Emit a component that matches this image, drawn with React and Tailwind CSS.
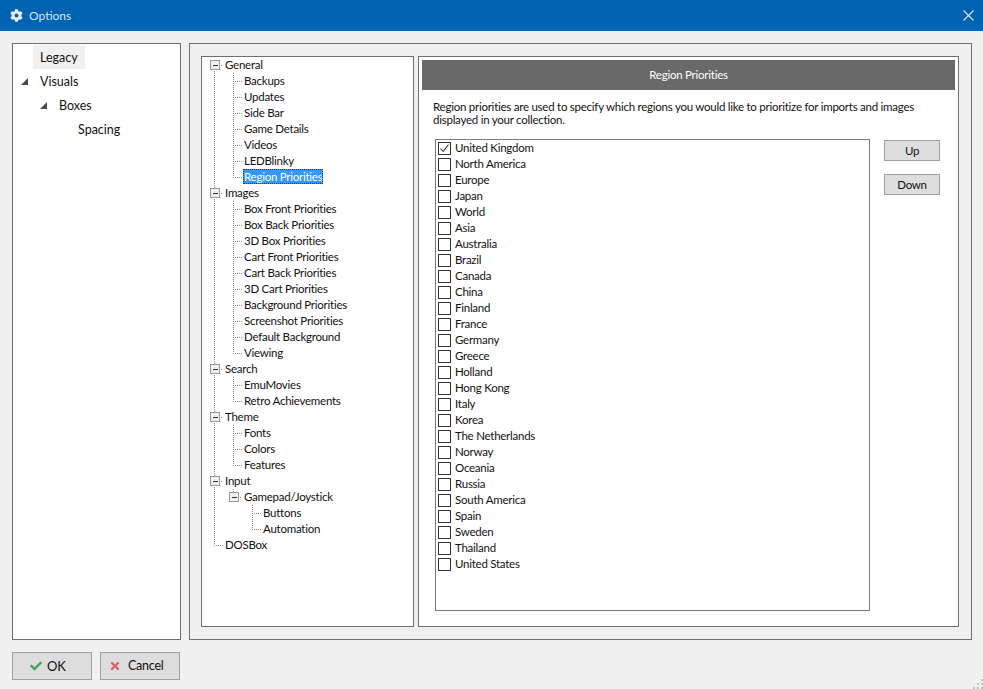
import React from 'react';
import { FaCog, FaCheck, FaTimes } from 'react-icons/fa';

const F = { fontFamily: 'Lato, sans-serif' };

const rows = [
  ['General', 0, 'g'], ['Backups', 1, 'a'], ['Updates', 1, 'a'], ['Side Bar', 1, 'a'], ['Game Details', 1, 'a'], ['Videos', 1, 'a'], ['LEDBlinky', 1, 'a'], ['Region Priorities', 1, 'l', true],
  ['Images', 0, 'g'], ['Box Front Priorities', 1, 'a'], ['Box Back Priorities', 1, 'a'], ['3D Box Priorities', 1, 'a'], ['Cart Front Priorities', 1, 'a'], ['Cart Back Priorities', 1, 'a'], ['3D Cart Priorities', 1, 'a'], ['Background Priorities', 1, 'a'], ['Screenshot Priorities', 1, 'a'], ['Default Background', 1, 'a'], ['Viewing', 1, 'l'],
  ['Search', 0, 'g'], ['EmuMovies', 1, 'a'], ['Retro Achievements', 1, 'l'],
  ['Theme', 0, 'g'], ['Fonts', 1, 'a'], ['Colors', 1, 'a'], ['Features', 1, 'l'],
  ['Input', 0, 'g'], ['Gamepad/Joystick', 1, 'g2'], ['Buttons', 2, 'a'], ['Automation', 2, 'l'],
  ['DOSBox', 0, 'e'],
];

const regions = ['United Kingdom', 'North America', 'Europe', 'Japan', 'World', 'Asia', 'Australia', 'Brazil', 'Canada', 'China', 'Finland', 'France', 'Germany', 'Greece', 'Holland', 'Hong Kong', 'Italy', 'Korea', 'The Netherlands', 'Norway', 'Oceania', 'Russia', 'South America', 'Spain', 'Sweden', 'Thailand', 'United States'];

const dot = { stroke: '#8a8a8a', strokeWidth: 1, strokeDasharray: '1 1', shapeRendering: 'crispEdges', fill: 'none' };

function Box({ x }) {
  return (
    <g shapeRendering="crispEdges">
      <rect x={x - 4.5} y={3.5} width={9} height={9} fill="#f0f0f0" stroke="#9a9a9a" />
      <line x1={x - 2} y1={8} x2={x + 3} y2={8} stroke="#333" />
    </g>
  );
}

function Guides({ depth, kind, index }) {
  const w = 23 + 19 * depth;
  const c0 = 12, c1 = 31, c2 = 50;
  const lastTop = index >= 30;
  return (
    <svg width={w} height={16} className="shrink-0 block">
      {kind === 'e' ? (
        <>
          <line x1={c0 + 0.5} y1={0} x2={c0 + 0.5} y2={8} {...dot} />
          <line x1={c0} y1={8.5} x2={21} y2={8.5} {...dot} />
        </>
      ) : (
        !lastTop && <line x1={c0 + 0.5} y1={index === 0 ? 12 : 0} x2={c0 + 0.5} y2={16} {...dot} />
      )}
      {kind === 'g' && (
        <>
          <line x1={c0 + 5} y1={8.5} x2={21} y2={8.5} {...dot} />
          <Box x={c0 + 0.5} />
        </>
      )}
      {kind === 'g2' && (
        <>
          <line x1={c1 + 0.5} y1={0} x2={c1 + 0.5} y2={4} {...dot} />
          <line x1={c1 + 5} y1={8.5} x2={40} y2={8.5} {...dot} />
          <Box x={c1 + 0.5} />
        </>
      )}
      {depth === 1 && (kind === 'a' || kind === 'l') && (
        <>
          <line x1={c1 + 0.5} y1={0} x2={c1 + 0.5} y2={kind === 'l' ? 8 : 16} {...dot} />
          <line x1={c1} y1={8.5} x2={41} y2={8.5} {...dot} />
        </>
      )}
      {depth === 2 && (
        <>
          <line x1={c2 + 0.5} y1={0} x2={c2 + 0.5} y2={kind === 'l' ? 8 : 16} {...dot} />
          <line x1={c2} y1={8.5} x2={59} y2={8.5} {...dot} />
        </>
      )}
    </svg>
  );
}

function Tri() {
  return (
    <svg width={7} height={7} className="block">
      <polygon points="7,0 7,7 0,7" fill="#4a4a4a" />
    </svg>
  );
}

function NavRow({ label, level, arrow, active }) {
  return (
    <div className="h-6 flex items-center text-[12.5px] text-[#111111]" style={{ paddingLeft: 27 + level * 19 }}>
      <div className="w-0 relative">
        {arrow && <div className="absolute left-[-19px] top-[-4px]"><Tri /></div>}
      </div>
      <span className={active ? 'bg-[#f0f0f0] h-6 leading-[26px] -ml-[7px] px-[7px] -translate-y-px' : ''}>{label}</span>
    </div>
  );
}

function Btn({ children, className }) {
  return (
    <button className={'bg-[#dddddd] border border-[#a0a0a0] text-[11.5px] tracking-[-0.25px] text-[#111111] flex items-center ' + className}>
      {children}
    </button>
  );
}

export default function App() {
  return (
    <div className="w-[983px] h-[689px] bg-[#f0f0f0] flex flex-col overflow-hidden relative" style={F}>
      <div className="h-[31px] bg-[#0063b1] flex items-center justify-between pl-[10px] pr-[9px] shrink-0">
        <div className="flex items-center gap-[6px] text-[12px] text-[#d5e6f5]">
          <FaCog className="w-[13px] h-[13px] text-[#e6eef6]" />
          <span>Options</span>
        </div>
        <svg width="11" height="11" viewBox="0 0 11 11"><path d="M0.5 0.5 L10.5 10.5 M10.5 0.5 L0.5 10.5" stroke="#dbe9f5" strokeWidth="1.1" /></svg>
      </div>

      <div className="flex gap-2 pl-3 pr-[11px] pt-3 h-[609px] shrink-0">
        <div className="w-[169px] bg-white border border-[#6f6f6f] pt-[2px]">
          <NavRow label="Legacy" level={0} active />
          <NavRow label="Visuals" level={0} arrow />
          <NavRow label="Boxes" level={1} arrow />
          <NavRow label="Spacing" level={2} />
        </div>

        <div className="flex-1 border border-[#6f6f6f] pl-[11px] pr-[12px] pt-3 pb-3 flex gap-1">
          <div className="w-[213px] bg-white border border-[#6f6f6f] shrink-0">
            {rows.map(([label, depth, kind, sel], i) => (
              <div key={label} className="h-4 flex items-center text-[11.5px] tracking-[-0.25px] text-[#111111]">
                <Guides depth={depth} kind={kind} index={i} />
                <span className={sel ? '-ml-[1px] pl-[1px] pr-[1px] h-[15px] leading-[16px] self-start bg-[#3399ff] text-white outline-1 outline-dotted outline-[#1d3f66] -outline-offset-1' : ''}>{label}</span>
              </div>
            ))}
          </div>

          <div className="flex-1 bg-white border border-[#6f6f6f] pt-[3px] pl-[3px] pr-[3px] flex flex-col">
            <div className="h-[30px] bg-[#696969] text-white text-[11.5px] tracking-[-0.25px] flex items-center justify-center shrink-0">Region Priorities</div>
            <p className="mt-[10px] ml-[11px] w-[490px] text-[11.5px] tracking-[-0.25px] leading-[13px] text-[#111111]">
              Region priorities are used to specify which regions you would like to prioritize for imports and images displayed in your collection.
            </p>
            <div className="flex mt-[13px] ml-[13px]">
              <div className="w-[435px] h-[472px] border border-[#7a7a7a] shrink-0">
                {regions.map((r, i) => (
                  <div key={r} className="h-4 flex items-center pl-[2px] text-[11.5px] tracking-[-0.25px] text-[#111111]">
                    <span className="w-[13px] h-[13px] border border-[#333333] bg-white mr-[4px] flex items-center justify-center shrink-0">
                      {i === 0 && (
                        <svg width="11" height="11" viewBox="0 0 11 11"><path d="M1.5 5.5 L4.2 8.5 L9.5 1.5" fill="none" stroke="#333" strokeWidth="1.1" /></svg>
                      )}
                    </span>
                    <span>{r}</span>
                  </div>
                ))}
              </div>
              <div className="ml-[14px] flex flex-col gap-[13px] mt-[1px]">
                <Btn className="w-[56px] h-[21px] justify-center">Up</Btn>
                <Btn className="w-[56px] h-[21px] justify-center">Down</Btn>
              </div>
            </div>
          </div>
        </div>
      </div>

      <div className="flex gap-2 pl-3 pt-3">
        <Btn className="w-[80px] h-[28px] gap-[5px] pl-[17px] border-[#7d7d7d]">
          <FaCheck className="w-3 h-3 text-[#4aa564]" />
          <span className="text-[13px] pt-px">OK</span>
        </Btn>
        <Btn className="w-[80px] h-[28px] gap-[7px] pl-[8px] border-[#7d7d7d]">
          <FaTimes className="w-3 h-3 text-[#d9626a]" />
          <span className="text-[12.5px] pt-px">Cancel</span>
        </Btn>
      </div>

      <svg className="absolute right-0 bottom-0" width="13" height="13" viewBox="0 0 13 13">
        {[[11, 3], [11, 7], [7, 7], [11, 11], [7, 11], [3, 11]].map(([x, y]) => (
          <rect key={x + '-' + y} x={x} y={y} width="2" height="2" fill="#c4c4c4" />
        ))}
      </svg>
    </div>
  );
}
